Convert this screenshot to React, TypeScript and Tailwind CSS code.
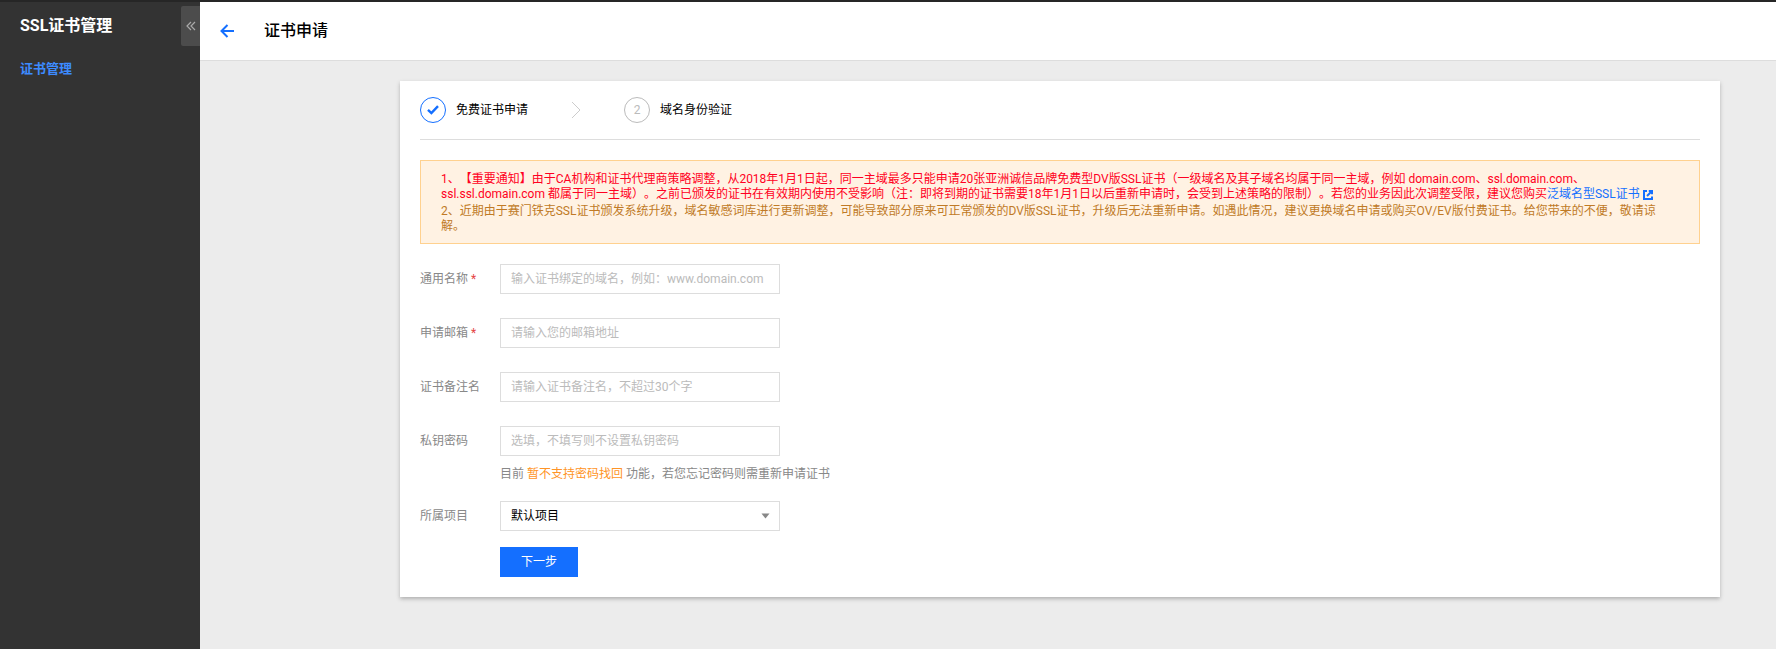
import type { ReactNode } from "react";

const inputClass =
    "h-[30px] w-[280px] border border-[#ddd] bg-white px-2.5 text-xs text-black outline-none placeholder:text-[#bbb] focus:border-[#146fff]";

function Sidebar() {
    return (
        <aside className="flex w-[200px] shrink-0 flex-col bg-[#333]">
            <div className="flex items-start justify-between pt-1 pl-5">
                <h2 className="pt-2 text-base leading-6 font-bold text-white">SSL证书管理</h2>
                <button type="button" aria-label="收起菜单" className="flex h-10 w-[19px] items-center justify-center rounded-l-xs bg-[#4c4c4c]">
                    <svg width="10" height="10" viewBox="0 0 10 10" fill="none" stroke="#aaa" strokeWidth="1.2">
                        <path d="M5 1 L1 5 L5 9 M9 1 L5 5 L9 9" />
                    </svg>
                </button>
            </div>
            <nav className="pt-2.5 pl-5">
                <a href="#certs" className="text-[13px] leading-5 font-bold text-[#3d8bff]">证书管理</a>
            </nav>
        </aside>
    );
}

function Steps() {
    return (
        <ol className="flex h-[59px] items-center border-b border-[#ddd] text-xs text-black">
            <li className="flex items-center gap-2.5">
                <span className="flex size-[26px] items-center justify-center rounded-full border border-[#146fff]">
                    <svg width="12" height="10" viewBox="0 0 12 10" fill="none" stroke="#146fff" strokeWidth="2.4">
                        <path d="M1 4.8 L4.4 8 L11 1.2" />
                    </svg>
                </span>
                免费证书申请
            </li>
            <li aria-hidden="true" className="mx-[43px]">
                <svg width="10" height="18" viewBox="0 0 10 18" fill="none" stroke="#ccc" strokeWidth="1">
                    <path d="M1 1 L9 9 L1 17" />
                </svg>
            </li>
            <li className="flex items-center gap-2.5">
                <span className="flex size-[26px] items-center justify-center rounded-full border border-[#bbb] text-[#bbb]">2</span>
                域名身份验证
            </li>
        </ol>
    );
}

function Notice() {
    return (
        <div className="mt-5 border border-[#ffd18f] bg-[#fff2e3] px-5 pt-[11px] pb-[9px] text-xs leading-[15px] [text-spacing-trim:space-all]">
            <p className="text-[#ff0022]">
                1、【重要通知】由于CA机构和证书代理商策略调整，从2018年1月1日起，同一主域最多只能申请20张亚洲诚信品牌免费型DV版SSL证书（一级域名及其子域名均属于同一主域，例如 domain.com、ssl.domain.com、ssl.ssl.domain.com 都属于同一主域）。之前已颁发的证书在有效期内使用不受影响（注：即将到期的证书需要18年1月1日以后重新申请时，会受到上述策略的限制）。若您的业务因此次调整受限，建议您购买
                <a href="#wildcard" className="text-[#146fff]">
                    泛域名型SSL证书
                    <svg className="ml-[3px] inline-block align-[-2px]" width="10" height="10" viewBox="0 0 10 10" fill="none" stroke="currentColor" strokeWidth="2">
                        <path d="M4 1 H1 V9 H9 V6.5" />
                        <path d="M5.8 1 H9 V4.2" />
                        <path d="M9 1 L4 6" />
                    </svg>
                </a>
            </p>
            <p className="mt-0.5 text-[#c07a26]">
                2、近期由于赛门铁克SSL证书颁发系统升级，域名敏感词库进行更新调整，可能导致部分原来可正常颁发的DV版SSL证书，升级后无法重新申请。如遇此情况，建议更换域名申请或购买OV/EV版付费证书。给您带来的不便，敬请谅解。
            </p>
        </div>
    );
}

function Field({ id, label, required, children }: { id: string; label: string; required?: boolean; children: ReactNode }) {
    return (
        <div className="flex items-start">
            <label htmlFor={id} className="w-20 shrink-0 text-xs leading-[30px] text-[#888]">
                {label}
                {required && <span className="ml-[3px] text-[#e54545]">*</span>}
            </label>
            <div>{children}</div>
        </div>
    );
}

export default function App() {
    return (
        <div className="flex min-h-screen border-t-2 border-[#262626] bg-[#ececec] font-['Roboto','Noto_Sans_CJK_SC',sans-serif]" lang="zh-CN">
            <Sidebar />
            <div className="min-w-0 flex-1">
                <header className="flex h-[59px] items-center gap-7 border-b border-[#ddd] bg-white px-5">
                    <button type="button" aria-label="返回" className="flex w-4 items-center">
                        <svg width="14" height="14" viewBox="0 0 14 14" fill="none" stroke="#146fff" strokeWidth="2">
                            <path d="M7.5 1 L1.5 7 L7.5 13 M1.5 7 H14" />
                        </svg>
                    </button>
                    <h1 className="text-base leading-6 font-medium text-black">证书申请</h1>
                </header>

                <main className="pt-5 pr-14 pb-13 pl-[200px]">
                    <div className="bg-white px-5 pb-5 shadow-[0_2px_4px_rgba(0,0,0,0.25)]">
                        <Steps />
                        <Notice />
                        <form className="pt-5">
                            <div className="flex flex-col gap-6">
                                <Field id="domain" label="通用名称" required>
                                    <input id="domain" type="text" placeholder="输入证书绑定的域名，例如：www.domain.com" className={inputClass} />
                                </Field>
                                <Field id="email" label="申请邮箱" required>
                                    <input id="email" type="email" placeholder="请输入您的邮箱地址" className={inputClass} />
                                </Field>
                                <Field id="remark" label="证书备注名">
                                    <input id="remark" type="text" placeholder="请输入证书备注名，不超过30个字" className={inputClass} />
                                </Field>
                                <Field id="password" label="私钥密码">
                                    <input id="password" type="password" placeholder="选填，不填写则不设置私钥密码" className={inputClass} />
                                    <p className="mt-2.5 text-xs leading-[17px] text-[#888]">
                                        目前 <span className="text-[#ff9426]">暂不支持密码找回</span> 功能，若您忘记密码则需重新申请证书
                                    </p>
                                </Field>
                            </div>
                            <div className="mt-[18px]">
                                <Field id="project" label="所属项目">
                                    <div className="relative">
                                        <select id="project" className={`${inputClass} block appearance-none`}>
                                            <option>默认项目</option>
                                        </select>
                                        <svg className="pointer-events-none absolute top-3 right-2.5" width="9" height="6" viewBox="0 0 9 6" fill="#888">
                                            <path d="M0.5 0.5 H8.5 L4.5 5.5 Z" />
                                        </svg>
                                    </div>
                                </Field>
                            </div>
                            <button type="button" className="mt-4 ml-20 block h-[30px] bg-[#146fff] px-[21px] text-xs text-white">
                                下一步
                            </button>
                        </form>
                    </div>
                </main>
            </div>
        </div>
    );
}
